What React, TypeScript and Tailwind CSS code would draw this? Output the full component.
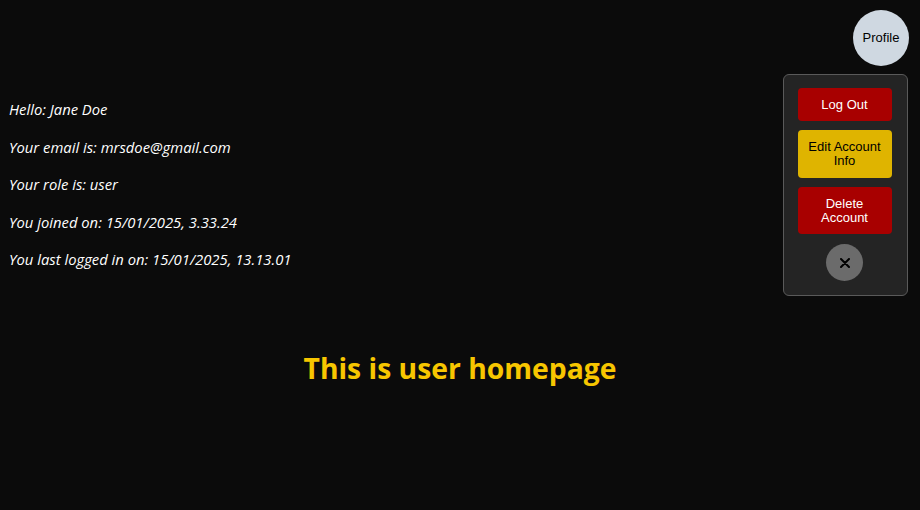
import React from "react";

export default function App() {
  return (
    <div className="relative w-[920px] h-[510px] bg-[#0b0b0b] overflow-hidden" style={{ fontFamily: '"Open Sans", sans-serif' }}>
      <div className="flex justify-end pt-[10px] pr-[11px]">
        <button className="w-[56px] h-[56px] rounded-full bg-[#cfd8e1] text-black text-[13px] font-['Liberation_Sans',sans-serif]">
          Profile
        </button>
      </div>
      <div className="absolute left-[783px] top-[74px] w-[125px] h-[222px] rounded-[6px] border border-[#5a5a5a] bg-[#242424] flex flex-col items-center pt-[13px] pr-[2px] font-['Liberation_Sans',sans-serif]">
        <button className="w-[94px] h-[33px] rounded-[4px] bg-[#a80000] text-white text-[13px] leading-[14px]">Log Out</button>
        <button className="mt-[9px] w-[94px] h-[48px] rounded-[4px] bg-[#dfb400] text-black text-[13px] leading-[14px]">Edit Account<br />Info</button>
        <button className="mt-[9px] w-[94px] h-[47px] rounded-[4px] bg-[#a80000] text-white text-[13px] leading-[14px]">Delete<br />Account</button>
        <button className="mt-[10px] w-[37px] h-[37px] rounded-full bg-[#6b6b6b] flex items-center justify-center text-black">
          <svg width="10" height="10" viewBox="0 0 10 10"><path d="M1 1 L9 9 M9 1 L1 9" stroke="#000" strokeWidth="2" strokeLinecap="round" /></svg>
        </button>
      </div>
      <div className="pl-[9px] pt-[33px] text-white italic text-[14.8px] leading-[21px] flex flex-col gap-[16.5px]">
        <p>Hello: Jane Doe</p>
        <p>Your email is: mrsdoe@gmail.com</p>
        <p>Your role is: user</p>
        <p>You joined on: 15/01/2025, 3.33.24</p>
        <p>You last logged in on: 15/01/2025, 13.13.01</p>
      </div>
      <h1 className="mt-[80px] text-center text-[28.3px] leading-[37px] font-bold text-[#f7c600]">This is user homepage</h1>
    </div>
  );
}
